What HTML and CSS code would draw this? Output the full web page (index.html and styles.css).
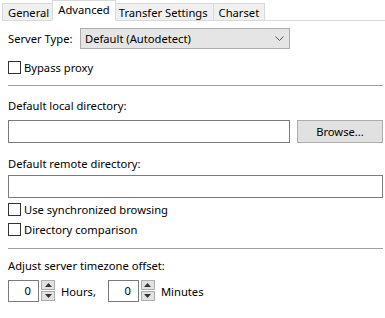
FILE: index.html
```html
<!DOCTYPE html>
<html>
<head>
<meta charset="utf-8">
<link rel="stylesheet" href="styles.css">
</head>
<body>
<div class="tabs">
  <div class="tab">General</div>
  <div class="tab active">Advanced</div>
  <div class="tab">Transfer Settings</div>
  <div class="tab">Charset</div>
  <div class="tab-fill"></div>
</div>
<div class="panel">
  <div class="row server-row">
    <span class="label">Server Type:</span>
    <div class="select"><span>Default (Autodetect)</span>
      <svg class="chev" width="9" height="6" viewBox="0 0 9 6"><path d="M0.5 0.5 L4.5 4.5 L8.5 0.5" fill="none" stroke="#555" stroke-width="1"/></svg>
    </div>
  </div>
  <label class="check first"><span class="box"></span>Bypass proxy</label>
  <div class="sep"></div>
  <div class="field-label">Default local directory:</div>
  <div class="row dir-row">
    <div class="input grow"></div>
    <div class="button">Browse...</div>
  </div>
  <div class="field-label remote">Default remote directory:</div>
  <div class="input full"></div>
  <label class="check sync"><span class="box"></span>Use synchronized browsing</label>
  <label class="check comp"><span class="box"></span>Directory comparison</label>
  <div class="sep sep2"></div>
  <div class="field-label tz">Adjust server timezone offset:</div>
  <div class="row tz-row">
    <div class="num">0</div>
    <div class="spin">
      <div class="sb"><svg width="7" height="4" viewBox="0 0 7 4"><path d="M0 4 L3.5 0 L7 4Z" fill="#333"/></svg></div>
      <div class="sb"><svg width="7" height="4" viewBox="0 0 7 4"><path d="M0 0 L3.5 4 L7 0Z" fill="#333"/></svg></div>
    </div>
    <span class="unit">Hours,</span>
    <div class="num">0</div>
    <div class="spin">
      <div class="sb"><svg width="7" height="4" viewBox="0 0 7 4"><path d="M0 4 L3.5 0 L7 4Z" fill="#333"/></svg></div>
      <div class="sb"><svg width="7" height="4" viewBox="0 0 7 4"><path d="M0 0 L3.5 4 L7 0Z" fill="#333"/></svg></div>
    </div>
    <span class="unit">Minutes</span>
  </div>
</div>
</body>
</html>
```
FILE: styles.css
```css
html, body {
  margin: 0;
  padding: 0;
  background: #fff;
  font-family: "Noto Sans", "Open Sans", sans-serif;
  font-size: 11.2px;
  color: #000;
  width: 385px;
  height: 318px;
  overflow: hidden;
}
.tabs {
  display: flex;
  align-items: flex-end;
  height: 21px;
  padding-left: 2px;
}
.tab {
  height: 18px;
  line-height: 17px;
  padding: 0 5px;
  background: #f0f0f0;
  border: 1px solid #d9d9d9;
  border-right: none;
  border-bottom: 1px solid #d9d9d9;
  box-sizing: border-box;
  white-space: nowrap;
}
.tab:nth-child(4) { border-right: 1px solid #d9d9d9; }
.tab.active {
  background: #fff;
  height: 21px;
  line-height: 18px;
  border: 1px solid #d9d9d9;
  border-bottom: 1px solid #fff;
  padding: 0 5px;
  margin: 0 -2px;
  position: relative;
  z-index: 1;
}
.tab.active + .tab { border-left: none; }
.tab-fill {
  flex: 1;
  height: 1px;
  background: #d9d9d9;
}
.panel {
  padding: 7px 2px 0 8px;
  display: flex;
  flex-direction: column;
}
.row { display: flex; align-items: center; }
.server-row { height: 21px; }
.server-row .label { width: 72px; }
.select {
  width: 210px;
  height: 21px;
  box-sizing: border-box;
  background: #e5e5e5;
  border: 1px solid #adadad;
  display: flex;
  align-items: center;
  justify-content: space-between;
  padding: 0 5px 0 4px;
}
.check {
  display: flex;
  align-items: center;
  height: 20px;
}
.check.first { margin-top: 8px; }
.box {
  width: 13px;
  height: 13px;
  box-sizing: border-box;
  border: 1px solid #333;
  background: #fff;
  margin-right: 3px;
}
.sep {
  height: 1px;
  background: #a0a0a0;
  margin-top: 8px;
}
.field-label {
  margin-top: 11px;
  height: 17px;
  line-height: 17px;
}
.dir-row { margin-top: 6px; gap: 7px; }
.input {
  height: 23px;
  box-sizing: border-box;
  border: 1px solid #7a7a7a;
  background: #fff;
}
.grow { width: 282px; }
.full { margin-top: 3px; width: 375px; }
.button {
  width: 86px;
  height: 23px;
  box-sizing: border-box;
  border: 1px solid #adadad;
  background: #e1e1e1;
  display: flex;
  align-items: center;
  justify-content: center;
}
.remote { margin-top: 12px; }
.check.sync { margin-top: 1px; }
.check.comp { margin-top: 0; }
.sep2 { margin-top: 9px; }
.tz { margin-top: 8px; }
.tz-row { margin-top: 6px; height: 22px; }
.num {
  width: 31px;
  height: 22px;
  box-sizing: border-box;
  border: 1px solid #7a7a7a;
  text-align: right;
  padding-right: 7px;
  line-height: 20px;
}
.spin {
  margin-left: 2px;
  display: flex;
  flex-direction: column;
  gap: 1px;
  height: 22px;
}
.sb {
  width: 14px;
  height: 10px;
  box-sizing: border-box;
  border: 1px solid #adadad;
  background: #e1e1e1;
  display: flex;
  align-items: center;
  justify-content: center;
}
.unit { margin-left: 6px; margin-right: 12px; }
```
